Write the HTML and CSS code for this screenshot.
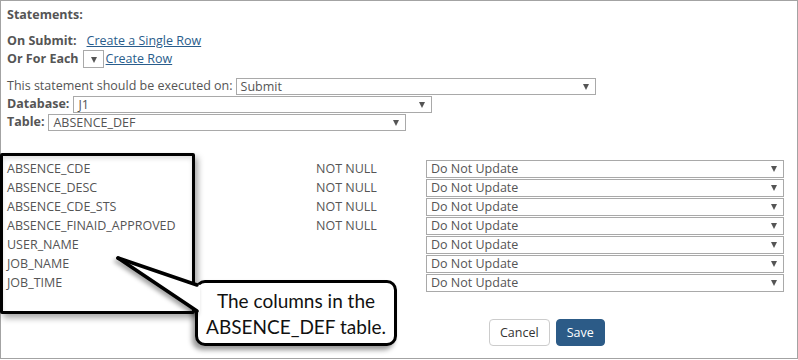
FILE: index.html
```html
<!DOCTYPE html>
<html lang="en">
<head>
    <meta charset="UTF-8">
    <meta name="viewport" content="width=device-width, initial-scale=1.0">
    <title>Statements</title>
    <link rel="stylesheet" href="styles.css">
</head>
<body>
    <div class="frame">
        <div class="line heading"><span class="label">Statements:</span></div>

        <div class="line submit-line">
            <span class="label on-submit">On Submit:</span>
            <a class="link" href="#">Create a Single Row</a>
        </div>
        <div class="line">
            <span class="label">Or For Each</span>
            <span class="select select-tiny"></span>
            <a class="link" href="#">Create Row</a>
        </div>

        <div class="line exec-line">
            <span>This statement should be executed on:</span>
            <span class="select w-exec">Submit</span>
        </div>
        <div class="line">
            <span class="label">Database:</span>
            <span class="select w-db">J1</span>
        </div>
        <div class="line">
            <span class="label">Table:</span>
            <span class="select w-table">ABSENCE_DEF</span>
        </div>

        <div class="columns">
            <div class="col-name">ABSENCE_CDE</div>
            <div class="col-null">NOT NULL</div>
            <div class="select w-col">Do Not Update</div>

            <div class="col-name">ABSENCE_DESC</div>
            <div class="col-null">NOT NULL</div>
            <div class="select w-col">Do Not Update</div>

            <div class="col-name">ABSENCE_CDE_STS</div>
            <div class="col-null">NOT NULL</div>
            <div class="select w-col">Do Not Update</div>

            <div class="col-name">ABSENCE_FINAID_APPROVED</div>
            <div class="col-null">NOT NULL</div>
            <div class="select w-col">Do Not Update</div>

            <div class="col-name">USER_NAME</div>
            <div class="col-null"></div>
            <div class="select w-col">Do Not Update</div>

            <div class="col-name">JOB_NAME</div>
            <div class="col-null"></div>
            <div class="select w-col">Do Not Update</div>

            <div class="col-name">JOB_TIME</div>
            <div class="col-null"></div>
            <div class="select w-col">Do Not Update</div>
        </div>

        <div class="actions">
            <button class="btn">Cancel</button>
            <button class="btn btn-primary">Save</button>
        </div>
    </div>

    <!-- annotation over the screenshot -->
    <div class="note-box"></div>
    <div class="bubble">The columns in the<br>ABSENCE_DEF table.</div>
    <svg class="tail" width="110" height="90" viewBox="0 0 110 90">
        <polygon points="18,17 100,44 100,71" fill="#fff"/>
        <line x1="18" y1="17" x2="97" y2="44" stroke="#000" stroke-width="3.5" stroke-linecap="round"/>
        <line x1="18" y1="17" x2="97" y2="70" stroke="#000" stroke-width="3.5" stroke-linecap="round"/>
    </svg>
</body>
</html>
```

FILE: styles.css
```css
body {
    margin: 0;
    font-family: 'Open Sans', 'Noto Sans', sans-serif;
    font-size: 12.5px;
    color: #555555;
    background-color: #ffffff;
}

.frame {
    width: 798px;
    height: 359px;
    box-sizing: border-box;
    border: 1px solid #a3a3a3;
    padding: 5px 6px 0 6px;
}

.line {
    display: flex;
    align-items: center;
    height: 18px;
    line-height: 18px;
    white-space: nowrap;
}

.label {
    font-weight: bold;
    margin-right: 4px;
}

.on-submit {
    margin-right: 10px;
}

.submit-line { margin-top: 8px; }
.exec-line { margin-top: 9px; }
.exec-line span:first-child { margin-right: 3px; }

.link {
    color: #2a5d8c;
    text-decoration: underline;
}

/* fake select boxes */
.select {
    position: relative;
    display: block;
    box-sizing: border-box;
    height: 17px;
    line-height: 15px;
    border: 1px solid #a9a9a9;
    padding: 0 4px;
    color: #555555;
    background-color: #ffffff;
}

.select::after {
    content: '';
    position: absolute;
    right: 6px;
    top: 5px;
    border-left: 3px solid transparent;
    border-right: 3px solid transparent;
    border-top: 6px solid #555555;
}

.select-tiny {
    width: 21px;
    height: 18px;
    margin-right: 2px;
}
.select-tiny::after { right: 6px; top: 6px; }

.w-exec { width: 360px; }
.w-db { width: 359px; }
.w-table { width: 358px; }

.columns {
    display: grid;
    grid-template-columns: 309px 110px 358px;
    grid-auto-rows: 18px;
    row-gap: 1px;
    margin-top: 29px;
    line-height: 18px;
}

.columns .select {
    height: 18px;
    line-height: 16px;
}

.actions {
    display: flex;
    gap: 6px;
    margin-top: 27px;
    padding-left: 482px;
}

.btn {
    height: 27px;
    padding: 0 10px;
    font-family: 'Open Sans', 'Noto Sans', sans-serif;
    font-size: 12.5px;
    color: #333333;
    background-color: #ffffff;
    border: 1px solid #cccccc;
    border-radius: 4px;
}

.btn-primary {
    color: #ffffff;
    background-color: #2c5b87;
    border-color: #2c5b87;
}

/* annotation */
.note-box {
    position: absolute;
    left: 0;
    top: 153px;
    width: 195px;
    height: 161px;
    box-sizing: border-box;
    border: 3.5px solid #000000;
    border-radius: 2px;
    box-shadow: 3px 4px 6px rgba(0, 0, 0, 0.35), inset 0 3px 4px rgba(0, 0, 0, 0.12);
}

.bubble {
    position: absolute;
    left: 195px;
    top: 280px;
    width: 202px;
    height: 66px;
    box-sizing: border-box;
    border: 3px solid #000000;
    border-radius: 10px;
    background-color: #ffffff;
    box-shadow: -3px 4px 5px rgba(0, 0, 0, 0.4);
    font-family: Lato, 'Open Sans', sans-serif;
    font-size: 19px;
    line-height: 26px;
    color: #111111;
    text-align: center;
    padding-top: 5px;
}

.tail {
    position: absolute;
    left: 100px;
    top: 241px;
    filter: drop-shadow(-2px 3px 2px rgba(0, 0, 0, 0.35));
}
```
